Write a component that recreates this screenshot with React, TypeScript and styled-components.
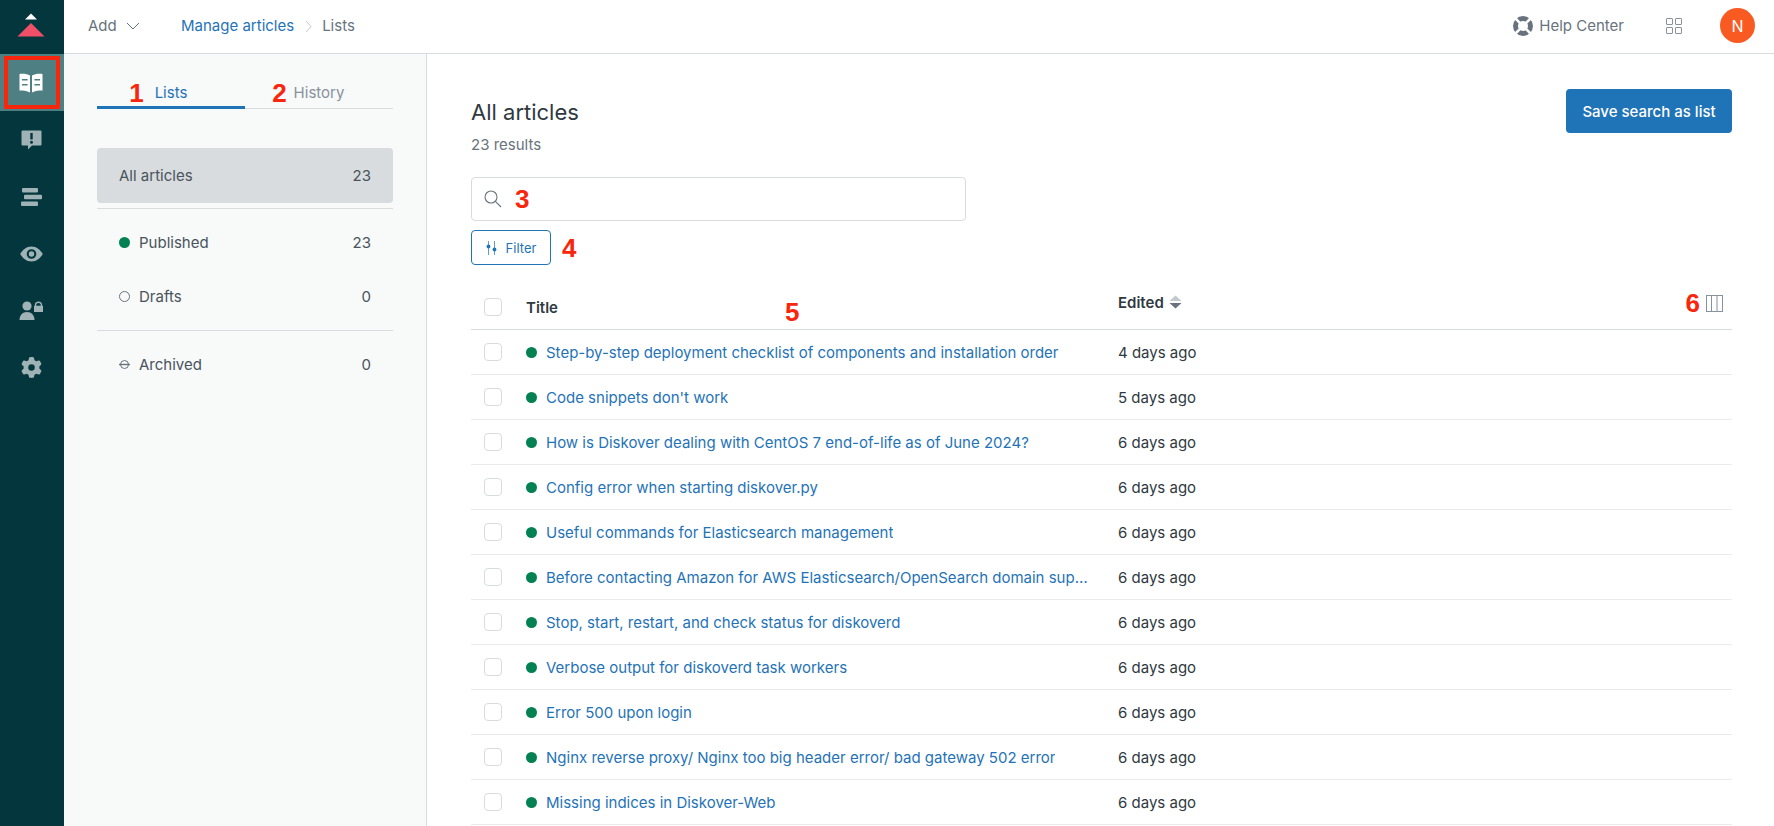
import React from 'react';
import styled, { createGlobalStyle } from 'styled-components';
import { FaGear } from 'react-icons/fa6';

const GlobalStyle = createGlobalStyle`
  html, body {
    margin: 0;
    padding: 0;
    height: 100%;
    overflow: hidden;
    background: #fff;
  }
  * {
    box-sizing: border-box;
  }
  body {
    font-family: Inter, "Liberation Sans", sans-serif;
    font-size: 15px;
    color: #2f3941;
  }
`;

const Page = styled.div`
  display: flex;
  width: 1774px;
  height: 826px;
  overflow: hidden;
`;

const Sidebar = styled.nav`
  flex: 0 0 64px;
  background: #03363d;
  display: flex;
  flex-direction: column;
`;

const Logo = styled.div`
  height: 54px;
  display: flex;
  align-items: flex-start;
  justify-content: center;
  padding: 13px 2px 0 0;
`;

const NavItem = styled.div<{ $active?: boolean }>`
  position: relative;
  height: 57px;
  display: flex;
  align-items: center;
  justify-content: center;
  padding-right: 2px;
  color: ${(p) => (p.$active ? '#fff' : '#9fb2b5')};
  background: ${(p) => (p.$active ? '#4e8083' : 'transparent')};
`;

const Highlight = styled.div`
  position: absolute;
  left: 4px;
  top: 2px;
  width: 56px;
  height: 53px;
  border: 4px solid #f7260c;
`;

const Body = styled.div`
  flex: 1;
  display: flex;
  flex-direction: column;
  min-width: 0;
`;

const TopBar = styled.header`
  flex: 0 0 54px;
  display: flex;
  align-items: center;
  padding: 0 19px 2px 24px;
  border-bottom: 1px solid #d8dcde;
  background: #fff;
`;

const AddMenu = styled.div`
  display: flex;
  align-items: center;
  gap: 9px;
  color: #68737d;
  width: 93px;
`;

const Crumbs = styled.div`
  display: flex;
  align-items: center;
  color: #68737d;
  flex: 1;
`;

const CrumbLink = styled.a`
  color: #1f73b7;
`;

const CrumbSep = styled.span`
  display: flex;
  margin: 2px 10px 0 11px;
  color: #c2c8cc;
`;

const HelpLink = styled.div`
  display: flex;
  align-items: center;
  gap: 6px;
  color: #68737d;
  margin-right: 42px;
`;

const Avatar = styled.div`
  width: 35px;
  height: 35px;
  margin-left: 38px;
  border-radius: 50%;
  background: #f85a22;
  color: #fff;
  font-size: 16px;
  display: flex;
  align-items: center;
  justify-content: center;
`;

const Columns = styled.div`
  flex: 1;
  display: flex;
  min-height: 0;
`;

const ListsPanel = styled.aside`
  flex: 0 0 363px;
  background: #f8f9f9;
  border-right: 1px solid #d8dcde;
  padding: 24px 33px 0 33px;
`;

const Tabs = styled.div`
  display: flex;
  height: 31px;
  margin-bottom: 39px;
`;

const Tab = styled.div<{ $active?: boolean }>`
  flex: 1;
  display: flex;
  justify-content: center;
  padding-top: 4px;
  color: ${(p) => (p.$active ? '#1f73b7' : '#87929d')};
  line-height: 22px;
  border-bottom: ${(p) => (p.$active ? '3px solid #1f73b7' : '1px solid #d8dcde')};
`;

const TabLabel = styled.span`
  position: relative;
`;

const Marker = styled.span`
  font-family: "Liberation Sans", Arial, sans-serif;
  font-weight: 700;
  font-size: 26px;
  line-height: 24px;
  color: #f7260c;
`;

const TabMarker = styled(Marker)<{ $gap: number }>`
  position: absolute;
  right: 100%;
  top: -1px;
  margin-right: ${(p) => p.$gap}px;
`;

const ListRow = styled.div<{ $selected?: boolean; $height: number }>`
  height: ${(p) => p.$height}px;
  display: flex;
  align-items: center;
  padding: 0 22px;
  border-radius: 4px;
  color: #49545c;
  background: ${(p) => (p.$selected ? '#d8dcde' : 'transparent')};
`;

const ListLabel = styled.span`
  flex: 1;
`;

const ListDivider = styled.div<{ $gap: number }>`
  height: 1px;
  background: #d8dcde;
  margin-top: ${(p) => p.$gap}px;
`;

const StatusDot = styled.span<{ $hollow?: boolean }>`
  width: 11px;
  height: 11px;
  border-radius: 50%;
  margin-right: 9px;
  flex: none;
  background: ${(p) => (p.$hollow ? 'transparent' : '#038153')};
  border: ${(p) => (p.$hollow ? '1px solid #68737d' : 'none')};
`;

const ArchivedMark = styled.span`
  width: 11px;
  height: 11px;
  margin-right: 9px;
  display: flex;
  flex: none;
`;

const Main = styled.main`
  flex: 1;
  padding: 35px 42px 0 44px;
  background: #fff;
  min-width: 0;
`;

const TitleRow = styled.div`
  display: flex;
  align-items: flex-start;
  justify-content: space-between;
  height: 88px;
`;

const Heading = styled.h1`
  margin: 9px 0 0;
  font-size: 22px;
  line-height: 28px;
  font-weight: 400;
  color: #2f3941;
`;

const Results = styled.div`
  margin-top: 9px;
  color: #68737d;
  line-height: 20px;
`;

const PrimaryButton = styled.button`
  width: 166px;
  height: 44px;
  border: none;
  border-radius: 4px;
  background: #1f73b7;
  color: #fff;
  font: 500 15px Inter, "Liberation Sans", sans-serif;
`;

const SearchBox = styled.div`
  width: 495px;
  height: 44px;
  border: 1px solid #d8dcde;
  border-radius: 4px;
  display: flex;
  align-items: center;
  gap: 13px;
  padding: 0 12px;
  color: #68737d;
`;

const FilterRow = styled.div`
  display: flex;
  align-items: center;
  gap: 11px;
  margin-top: 9px;
  height: 35px;
`;

const FilterButton = styled.button`
  width: 80px;
  height: 35px;
  border: 1px solid #1f73b7;
  border-radius: 4px;
  background: #fff;
  color: #1f73b7;
  display: flex;
  align-items: center;
  justify-content: center;
  gap: 9px;
  font: 400 13px Inter, "Liberation Sans", sans-serif;
`;

const Table = styled.div`
  margin-top: 20px;
`;

const HeaderRow = styled.div`
  height: 45px;
  display: flex;
  align-items: center;
  border-bottom: 1px solid #d8dcde;
`;

const Row = styled.div`
  height: 45px;
  display: flex;
  align-items: center;
  border-bottom: 1px solid #e9ebed;
`;

const CheckCell = styled.div`
  flex: 0 0 55px;
  padding-left: 13px;
  display: flex;
`;

const CheckBox = styled.span`
  width: 18px;
  height: 18px;
  border: 1px solid #d8dcde;
  border-radius: 4px;
  background: #fff;
`;

const TitleCell = styled.div`
  flex: 0 0 592px;
  display: flex;
  align-items: center;
  padding-right: 24px;
  min-width: 0;
`;

const HeadTitle = styled.span`
  font-weight: 600;
  color: #2f3941;
  margin-top: 1px;
`;

const HeadMarker = styled(Marker)`
  margin: 9px 0 0 227px;
`;

const ArticleDot = styled.span`
  flex: none;
  width: 11px;
  height: 11px;
  border-radius: 50%;
  background: #038153;
  margin-right: 9px;
`;

const ArticleLink = styled.a`
  color: #1f73b7;
  white-space: nowrap;
  overflow: hidden;
  text-overflow: ellipsis;
`;

const EditedHead = styled.div`
  flex: 1;
  display: flex;
  align-items: center;
  gap: 5px;
  font-weight: 600;
  margin-top: -10px;
`;

const EditedCell = styled.div`
  flex: 1;
  color: #2f3941;
`;

const ColumnPicker = styled.div`
  display: flex;
  align-items: center;
  gap: 6px;
  padding-right: 9px;
  margin-top: -8px;
`;

const ARTICLES: { title: string; edited: string }[] = [
  { title: 'Step-by-step deployment checklist of components and installation order', edited: '4 days ago' },
  { title: "Code snippets don't work", edited: '5 days ago' },
  { title: 'How is Diskover dealing with CentOS 7 end-of-life as of June 2024?', edited: '6 days ago' },
  { title: 'Config error when starting diskover.py', edited: '6 days ago' },
  { title: 'Useful commands for Elasticsearch management', edited: '6 days ago' },
  { title: 'Before contacting Amazon for AWS Elasticsearch/OpenSearch domain support', edited: '6 days ago' },
  { title: 'Stop, start, restart, and check status for diskoverd', edited: '6 days ago' },
  { title: 'Verbose output for diskoverd task workers', edited: '6 days ago' },
  { title: 'Error 500 upon login', edited: '6 days ago' },
  { title: 'Nginx reverse proxy/ Nginx too big header error/ bad gateway 502 error', edited: '6 days ago' },
  { title: 'Missing indices in Diskover-Web', edited: '6 days ago' },
];

const LogoMark = () => (
  <svg width="28" height="24" viewBox="0 0 28 24">
    <path d="M14 0.5 L20 6.5 H8 Z" fill="#fff" />
    <path d="M14 10 L27.5 23.5 H0.5 Z" fill="#ef5068" />
  </svg>
);

const BookIcon = () => (
  <svg width="24" height="20" viewBox="0 0 24 20" fill="currentColor">
    <path fillRule="evenodd" d="M0.5 1 C4 0.5 8 0.7 11 2.5 V19.5 C8 17.8 4 17.5 0.5 17.5 Z M3 6 V7.6 H8.6 V6 Z M3 11 V12.6 H8.6 V11 Z" />
    <path fillRule="evenodd" d="M23.5 1 C20 0.5 16 0.7 13 2.5 V19.5 C16 17.8 20 17.5 23.5 17.5 Z M15.4 6 V7.6 H21 V6 Z M15.4 11 V12.6 H21 V11 Z" />
  </svg>
);

const AlertIcon = () => (
  <svg width="21" height="20" viewBox="0 0 21 20" fill="currentColor">
    <path fillRule="evenodd" d="M1.5 0.5 H19.5 A1 1 0 0 1 20.5 1.5 V14.5 A1 1 0 0 1 19.5 15.5 H11 L7 19.5 V15.5 H1.5 A1 1 0 0 1 0.5 14.5 V1.5 A1 1 0 0 1 1.5 0.5 Z M9.3 3 V9.5 H11.7 V3 Z M10.5 10.8 A1.5 1.5 0 1 0 10.5 13.8 A1.5 1.5 0 1 0 10.5 10.8 Z" />
  </svg>
);

const StackIcon = () => (
  <svg width="21" height="18" viewBox="0 0 21 18" fill="currentColor">
    <rect x="1" y="0" width="16" height="4.5" rx="1" />
    <rect x="3" y="6.7" width="18" height="4.5" rx="1" />
    <rect x="0" y="13.4" width="17" height="4.5" rx="1" />
  </svg>
);

const EyeIcon = () => (
  <svg width="23" height="16" viewBox="0 0 23 16" fill="currentColor">
    <path fillRule="evenodd" d="M11.5 0.5 C16.5 0.5 20.5 4 22.8 8 C20.5 12 16.5 15.5 11.5 15.5 C6.5 15.5 2.5 12 0.2 8 C2.5 4 6.5 0.5 11.5 0.5 Z M11.5 3.2 A4.8 4.8 0 1 0 11.5 12.8 A4.8 4.8 0 1 0 11.5 3.2 Z M11.5 5.3 A2.7 2.7 0 1 1 11.5 10.7 A2.7 2.7 0 1 1 11.5 5.3 Z" />
  </svg>
);

const UserLockIcon = () => (
  <svg width="24" height="19" viewBox="0 0 24 19" fill="currentColor">
    <circle cx="8" cy="5" r="4.6" />
    <path d="M0.5 19 C0.5 14.5 3.5 11 8 11 C12.5 11 15.5 14.5 15.5 19 Z" />
    <path fillRule="evenodd" d="M15.8 4.8 V3.8 C15.8 1.8 17.2 0.5 19.5 0.5 C21.8 0.5 23.2 1.8 23.2 3.8 V4.8 H24 V11 H15 V4.8 Z M17.3 4.8 H21.7 V3.8 C21.7 2.6 20.9 1.9 19.5 1.9 C18.1 1.9 17.3 2.6 17.3 3.8 Z" />
  </svg>
);

const Chevron = ({ dir }: { dir: 'down' | 'right' }) =>
  dir === 'down' ? (
    <svg width="14" height="8" viewBox="0 0 14 8" fill="none" stroke="#68737d">
      <path d="M1 1 L7 7 L13 1" />
    </svg>
  ) : (
    <svg width="7" height="13" viewBox="0 0 7 13" fill="none" stroke="#c2c8cc">
      <path d="M1 1 L6 6.5 L1 12" />
    </svg>
  );

const HelpIcon = () => (
  <svg width="20" height="20" viewBox="0 0 20 20" fill="#68737d">
    <path fillRule="evenodd" d="M10 0 A10 10 0 1 0 10 20 A10 10 0 1 0 10 0 Z M10 5 A5 5 0 1 1 10 15 A5 5 0 1 1 10 5 Z" />
    <g stroke="#fff" strokeWidth="2.6">
      <path d="M2 2 L6.8 6.8" />
      <path d="M18 2 L13.2 6.8" />
      <path d="M2 18 L6.8 13.2" />
      <path d="M18 18 L13.2 13.2" />
    </g>
  </svg>
);

const GridIcon = () => (
  <svg width="16" height="16" viewBox="0 0 16 16" fill="none" stroke="#87929d">
    <rect x="0.5" y="0.5" width="6" height="6" rx="0.5" />
    <rect x="9.5" y="0.5" width="6" height="6" rx="0.5" />
    <rect x="0.5" y="9.5" width="6" height="6" rx="0.5" />
    <rect x="9.5" y="9.5" width="6" height="6" rx="0.5" />
  </svg>
);

const SearchIcon = () => (
  <svg width="18" height="18" viewBox="0 0 18 18" fill="none" stroke="#68737d" strokeWidth="1.1">
    <circle cx="7" cy="7" r="6" />
    <path d="M11.4 11.4 L17 17" />
  </svg>
);

const FilterIcon = () => (
  <svg width="11" height="14" viewBox="0 0 11 14" fill="#1f73b7">
    <path d="M2.5 0 V14 M8.5 0 V14" stroke="#1f73b7" strokeWidth="0.7" />
    <circle cx="2.5" cy="5.5" r="1.9" />
    <circle cx="8.5" cy="8.5" r="1.9" />
  </svg>
);

const SortIcon = () => (
  <svg width="13" height="14" viewBox="0 0 13 14">
    <path d="M6.5 0.5 L12.5 6 H0.5 Z" fill="#c2c8cc" />
    <path d="M6.5 13.5 L12.5 8 H0.5 Z" fill="#68737d" />
  </svg>
);

const ColumnsIcon = () => (
  <svg width="17" height="17" viewBox="0 0 17 17" fill="none" stroke="#87929d">
    <rect x="0.5" y="0.5" width="16" height="16" />
    <path d="M5.5 0.5 V16.5 M11 0.5 V16.5" />
  </svg>
);

const ArchiveIcon = () => (
  <svg width="11" height="11" viewBox="0 0 11 11" fill="none" stroke="#68737d">
    <circle cx="5.5" cy="5.5" r="4" />
    <path d="M0 5.5 H11" strokeWidth="1.4" />
  </svg>
);

export default function App() {
  return (
    <>
      <GlobalStyle />
      <Page>
        <Sidebar>
          <Logo>
            <LogoMark />
          </Logo>
          <NavItem $active>
            <BookIcon />
            <Highlight />
          </NavItem>
          <NavItem>
            <AlertIcon />
          </NavItem>
          <NavItem>
            <StackIcon />
          </NavItem>
          <NavItem>
            <EyeIcon />
          </NavItem>
          <NavItem>
            <UserLockIcon />
          </NavItem>
          <NavItem>
            <FaGear size={21} />
          </NavItem>
        </Sidebar>
        <Body>
          <TopBar>
            <AddMenu>
              Add <Chevron dir="down" />
            </AddMenu>
            <Crumbs>
              <CrumbLink>Manage articles</CrumbLink>
              <CrumbSep>
                <Chevron dir="right" />
              </CrumbSep>
              Lists
            </Crumbs>
            <HelpLink>
              <HelpIcon />
              Help Center
            </HelpLink>
            <GridIcon />
            <Avatar>N</Avatar>
          </TopBar>
          <Columns>
            <ListsPanel>
              <Tabs>
                <Tab $active>
                  <TabLabel>
                    <TabMarker $gap={11}>1</TabMarker>
                    Lists
                  </TabLabel>
                </Tab>
                <Tab>
                  <TabLabel>
                    <TabMarker $gap={7}>2</TabMarker>
                    History
                  </TabLabel>
                </Tab>
              </Tabs>
              <ListRow $selected $height={55}>
                <ListLabel>All articles</ListLabel>
                23
              </ListRow>
              <ListDivider $gap={5} />
              <ListRow $height={66}>
                <StatusDot />
                <ListLabel>Published</ListLabel>
                23
              </ListRow>
              <ListRow $height={43}>
                <StatusDot $hollow />
                <ListLabel>Drafts</ListLabel>
                0
              </ListRow>
              <ListDivider $gap={12} />
              <ListRow $height={66}>
                <ArchivedMark>
                  <ArchiveIcon />
                </ArchivedMark>
                <ListLabel>Archived</ListLabel>
                0
              </ListRow>
            </ListsPanel>
            <Main>
              <TitleRow>
                <div>
                  <Heading>All articles</Heading>
                  <Results>23 results</Results>
                </div>
                <PrimaryButton>Save search as list</PrimaryButton>
              </TitleRow>
              <SearchBox>
                <SearchIcon />
                <Marker>3</Marker>
              </SearchBox>
              <FilterRow>
                <FilterButton>
                  <FilterIcon />
                  Filter
                </FilterButton>
                <Marker>4</Marker>
              </FilterRow>
              <Table>
                <HeaderRow>
                  <CheckCell>
                    <CheckBox />
                  </CheckCell>
                  <TitleCell>
                    <HeadTitle>Title</HeadTitle>
                    <HeadMarker>5</HeadMarker>
                  </TitleCell>
                  <EditedHead>
                    Edited <SortIcon />
                  </EditedHead>
                  <ColumnPicker>
                    <Marker>6</Marker>
                    <ColumnsIcon />
                  </ColumnPicker>
                </HeaderRow>
                {ARTICLES.map((a) => (
                  <Row key={a.title}>
                    <CheckCell>
                      <CheckBox />
                    </CheckCell>
                    <TitleCell>
                      <ArticleDot />
                      <ArticleLink>{a.title}</ArticleLink>
                    </TitleCell>
                    <EditedCell>{a.edited}</EditedCell>
                  </Row>
                ))}
              </Table>
            </Main>
          </Columns>
        </Body>
      </Page>
    </>
  );
}
